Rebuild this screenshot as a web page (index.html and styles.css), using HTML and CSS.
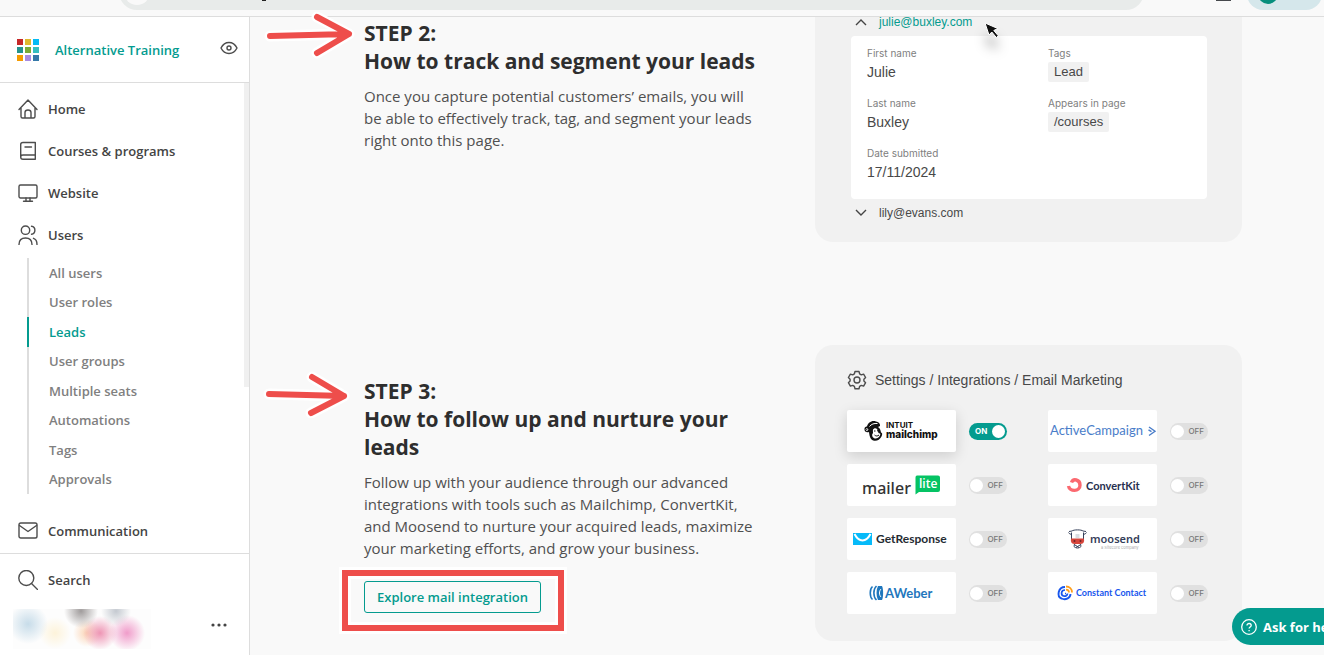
FILE: index.html
```
<!DOCTYPE html>
<html lang="en">
<head>
    <meta charset="UTF-8">
    <meta name="viewport" content="width=device-width, initial-scale=1.0">
    <title>Leads</title>
    <link rel="stylesheet" href="styles.css">
</head>
<body>
    <header class="browser-bar">
        <div class="address"><span class="site-info"></span><span class="caret"></span></div>
        <span class="download"></span>
        <div class="profile"><span class="profile-dot"></span></div>
    </header>

    <div class="app">
        <aside class="sidebar">
            <div class="brand">
                <svg class="brand-logo" width="22" height="22" viewBox="0 0 22 22" aria-hidden="true">
                    <rect x="0" y="0" width="6" height="6" fill="#c62828"/>
                    <rect x="8" y="0" width="6" height="6" fill="#e0b92e"/>
                    <rect x="16" y="0" width="6" height="6" fill="#03bbf5"/>
                    <rect x="0" y="8" width="6" height="6" fill="#26938d"/>
                    <rect x="8" y="8" width="6" height="6" fill="#7cab35"/>
                    <rect x="16" y="8" width="6" height="6" fill="#35bfc0"/>
                    <rect x="0" y="16" width="6" height="6" fill="#f59b00"/>
                    <rect x="8" y="16" width="6" height="6" fill="#a98be0"/>
                    <rect x="16" y="16" width="6" height="6" fill="#3579a8"/>
                </svg>
                <a href="#" class="brand-name">Alternative Training</a>
                <button type="button" class="icon-button" aria-label="Preview">
                    <svg class="icon" width="18" height="14" viewBox="0 0 18 14">
                        <path d="M1 7C3 3 5.800 1.500 9 1.500S15 3 17 7c-2 4-4.800 5.500-8 5.500S3 11 1 7z"/>
                        <circle cx="9" cy="7" r="2"/>
                    </svg>
                </button>
            </div>

            <nav class="menu">
                <a href="#" class="menu-item">
                    <svg class="icon" width="20" height="20" viewBox="0 0 20 20"><path d="M1 10.500L10 1l9 9.500M3 9v8.500c0 1 .6 1.500 1.500 1.500h11c.9 0 1.500-.5 1.500-1.500V9M7 19v-5.500c0-1.500 1-2.500 3-2.500s3 1 3 2.500V19"/></svg>
                    Home
                </a>
                <a href="#" class="menu-item">
                    <svg class="icon" width="20" height="20" viewBox="0 0 20 20"><path d="M17.300 14V1.500H5C3.500 1.500 2.700 2.300 2.700 3.500V16c0 1.300.8 2.200 2.300 2.200h12.300V14H5c-1.500 0-2.300.8-2.300 2M7 6h6.500"/></svg>
                    Courses &amp; programs
                </a>
                <a href="#" class="menu-item">
                    <svg class="icon" width="20" height="20" viewBox="0 0 20 20"><rect x="1" y="2" width="18" height="13" rx="1.500"/><path d="M8 15v3M12 15v3M5.500 18.300h9"/></svg>
                    Website
                </a>
                <a href="#" class="menu-item">
                    <svg class="icon" width="20" height="20" viewBox="0 0 20 20"><circle cx="7.500" cy="5.200" r="4.200"/><path d="M1 19.500c0-4.500 2.300-6.500 6.500-6.500s6.500 2 6.500 6.500M13.500 1.300c4.500.5 4.500 7.300 0 7.900M15.500 13.300c2.500.8 3.500 2.900 3.500 6.200"/></svg>
                    Users
                </a>
                <ul class="submenu">
                    <li><a href="#">All users</a></li>
                    <li><a href="#">User roles</a></li>
                    <li class="active"><a href="#">Leads</a></li>
                    <li><a href="#">User groups</a></li>
                    <li><a href="#">Multiple seats</a></li>
                    <li><a href="#">Automations</a></li>
                    <li><a href="#">Tags</a></li>
                    <li><a href="#">Approvals</a></li>
                </ul>
                <a href="#" class="menu-item">
                    <svg class="icon" width="20" height="20" viewBox="0 0 20 20"><rect x="1" y="2" width="18" height="15" rx="1.800"/><path d="M1.500 4.500L10 10.500l8.500-6"/></svg>
                    Communication
                </a>
            </nav>

            <div class="sidebar-footer">
                <a href="#" class="menu-item">
                    <svg class="icon" width="20" height="20" viewBox="0 0 20 20"><circle cx="8.300" cy="8" r="7.500"/><path d="M13.500 13.500l6 6"/></svg>
                    Search
                </a>
                <div class="user">
                    <div class="user-name"></div>
                    <button type="button" class="icon-button" aria-label="More">
                        <svg width="16" height="4" viewBox="0 0 16 4" fill="#444"><circle cx="2" cy="2" r="1.600"/><circle cx="8" cy="2" r="1.600"/><circle cx="14" cy="2" r="1.600"/></svg>
                    </button>
                </div>
            </div>
        </aside>

        <main class="content">
            <section class="step">
                <svg class="arrow arrow-two" width="92" height="48" viewBox="0 0 92 48" aria-hidden="true">
                    <path class="halo" d="M6 25L84 23M53 6l32 17-32 19"/>
                    <path d="M6 25L84 23M53 6l32 17-32 19"/>
                </svg>
                <div class="step-text">
                    <h2>STEP 2:<br>How to track and segment your leads</h2>
                    <p>Once you capture potential customers’ emails, you will be able to effectively track, tag, and segment your leads right onto this page.</p>
                </div>
                <div class="card leads-card">
                    <button type="button" class="lead open">
                        <svg class="chevron" width="12" height="8" viewBox="0 0 12 8"><path d="M1 7l5-5 5 5"/></svg>
                        julie@buxley.com
                    </button>
                    <div class="lead-panel">
                        <dl>
                            <dt>First name</dt>
                            <dd>Julie</dd>
                            <dt>Last name</dt>
                            <dd>Buxley</dd>
                            <dt>Date submitted</dt>
                            <dd>17/11/2024</dd>
                        </dl>
                        <dl>
                            <dt>Tags</dt>
                            <dd><span class="tag">Lead</span></dd>
                            <dt>Appears in page</dt>
                            <dd><span class="tag">/courses</span></dd>
                        </dl>
                    </div>
                    <button type="button" class="lead">
                        <svg class="chevron" width="12" height="8" viewBox="0 0 12 8"><path d="M1 1l5 5 5-5"/></svg>
                        lily@evans.com
                    </button>
                    <svg class="cursor" width="16" height="17" viewBox="0 0 16 17" aria-hidden="true"><path d="M1 1l4 12 2.800-3 4.500 5.500 2-1.700-4.500-5.300 4-2z" fill="#111" stroke="#fff"/></svg>
                </div>
            </section>

            <section class="step">
                <svg class="arrow arrow-three" width="92" height="48" viewBox="0 0 92 48" aria-hidden="true">
                    <path class="halo" d="M6 24l75 2M49 7l32 19-33 17"/>
                    <path d="M6 24l75 2M49 7l32 19-33 17"/>
                </svg>
                <div class="step-text">
                    <h2>STEP 3:<br>How to follow up and nurture your leads</h2>
                    <p>Follow up with your audience through our advanced integrations with tools such as Mailchimp, ConvertKit, and Moosend to nurture your acquired leads, maximize your marketing efforts, and grow your business.</p>
                    <div class="highlight">
                        <button type="button" class="outline-button">Explore mail integration</button>
                    </div>
                </div>
                <div class="card settings-card">
                    <h3>
                        <svg class="icon" width="20" height="20" viewBox="0 0 20 20"><path d="M8 1.500h4l.6 2.300 1.700 1 2.300-.7 2 3.400-1.700 1.700v1.800l1.700 1.700-2 3.400-2.300-.7-1.700 1-.6 2.300H8l-.6-2.300-1.700-1-2.300.7-2-3.400L3.100 11V9.200L1.400 7.500l2-3.400 2.300.7 1.700-1z"/><circle cx="10" cy="10" r="3"/></svg>
                        Settings / Integrations / Email Marketing
                    </h3>
                    <div class="integrations">
                        <div class="integration">
                            <div class="logo raised">
                                <svg width="109" height="42" viewBox="0 0 109 42">
                                    <path d="M22 22c-3 1-5-1-4.500-3.500.3-1.500 1.500-2 2.500-2C21 12.500 25 10 29 11.500c2.500.2 4.500 2.500 4 4.500l-2 1c2 1 2.500 3 3 5.500 1.500.2 1.500 2 .5 4-1.500 3-4 4.500-7 4.300-3.500-.2-5-3.800-5.500-8.800z" fill="#111"/>
                                    <path d="M22.500 16.500c2-2.500 4.500-3.300 8-3M18.800 19.500c.8-1.500 2-1 2 .2-.1 1-1 1-1.800.8" fill="none" stroke="#fff"/>
                                    <path d="M26 19.500c1.500-1.800 3-1.500 4-.5.8 1.500 1 2.500 1.500 4l1.800.8c0 2.500-2 4.700-4.500 4.700-3 0-4-2.500-3.500-4.500 1.500-1 .2-2.500.7-4.500z" fill="#fff"/>
                                    <path d="M27 21h1.500M30 20.800h1M27.500 25c1.500 1.300 3 1.300 4.500 0" fill="none" stroke="#111"/>
                                    <text class="intuit" x="39" y="18">INTUIT</text>
                                    <text class="mailchimp" x="39" y="28">mailchimp</text>
                                </svg>
                            </div>
                            <label class="switch on"><input type="checkbox" aria-label="Mailchimp" checked><span>ON</span></label>
                        </div>
                        <div class="integration">
                            <div class="logo">
                                <svg width="109" height="42" viewBox="0 0 109 42">
                                    <text class="activecampaign" x="2" y="25">ActiveCampaign</text>
                                    <path d="M101 17l6 4.300-6 4.200M100.500 19.800l3 1.800" fill="none" stroke="#4a7dc9" stroke-width="1.400"/>
                                </svg>
                            </div>
                            <label class="switch"><input type="checkbox" aria-label="ActiveCampaign"><span>OFF</span></label>
                        </div>
                        <div class="integration">
                            <div class="logo">
                                <svg width="109" height="42" viewBox="0 0 109 42">
                                    <text class="mailer" x="15" y="30">mailer</text>
                                    <path d="M70 11.500h21q2 0 2 2V26q0 2-2 2H72l-3.500 2.500v-17q0-2 1.500-2z" fill="#05c364"/>
                                    <text class="lite" x="72" y="24">lite</text>
                                </svg>
                            </div>
                            <label class="switch"><input type="checkbox" aria-label="MailerLite"><span>OFF</span></label>
                        </div>
                        <div class="integration">
                            <div class="logo">
                                <svg width="109" height="42" viewBox="0 0 109 42">
                                    <path d="M20.500 22c1 6 11.500 6 11.500-.800 0-6-7-7-8.500-2.700" fill="none" stroke="#fb6970" stroke-width="3.400"/>
                                    <text class="convertkit" x="38" y="26">ConvertKit</text>
                                </svg>
                            </div>
                            <label class="switch"><input type="checkbox" aria-label="ConvertKit"><span>OFF</span></label>
                        </div>
                        <div class="integration">
                            <div class="logo">
                                <svg width="109" height="42" viewBox="0 0 109 42">
                                    <rect x="6" y="15" width="19" height="12" fill="#06baf9"/>
                                    <path d="M7.500 16c4.500 8.500 11.500 8.500 16 0" fill="none" stroke="#fff" stroke-width="2"/>
                                    <text class="getresponse" x="29" y="25">GetResponse</text>
                                </svg>
                            </div>
                            <label class="switch"><input type="checkbox" aria-label="GetResponse"><span>OFF</span></label>
                        </div>
                        <div class="integration">
                            <div class="logo">
                                <svg width="109" height="42" viewBox="0 0 109 42">
                                    <path d="M23.500 14.500V21M35.500 14.500V21M24 13c1.500-1.500 9.500-1.500 11 0M20.500 14.500c1 1.500 2 2 3.500 1.500M38.500 14.500c-1 1.500-2 2-3.500 1.500M21 13.500l3-.5M38 13.500l-3-.5M26.500 26l-.5 2.500c2 2 5 2 7 0L32.500 26M27 27l4 2.500M32 27l-4 2.500" fill="none" stroke="#35405a" stroke-width="1"/>
                                    <path d="M27.500 17h4M27.500 19h4" fill="none" stroke="#b4bac4" stroke-width="1"/>
                                    <path d="M23 20.500h13q1 5.500-4 5.500h-5q-5 0-4-5.500z" fill="#d5453b"/>
                                    <circle cx="26.500" cy="23" r="1" fill="#71242a"/><circle cx="32.500" cy="23" r="1" fill="#71242a"/>
                                    <text class="moosend" x="42" y="25">moosend</text>
                                    <text class="sitecore" x="53" y="31">a Sitecore company</text>
                                </svg>
                            </div>
                            <label class="switch"><input type="checkbox" aria-label="Moosend"><span>OFF</span></label>
                        </div>
                        <div class="integration">
                            <div class="logo">
                                <svg width="109" height="42" viewBox="0 0 109 42">
                                    <path d="M25.500 14.500c-3 2.500-3 10.500 0 13" fill="none" stroke="#1f77bd" stroke-width="1.600"/>
                                    <path d="M29.500 14c-3.500 3-3.500 11 0 14" fill="none" stroke="#1f77bd" stroke-width="1.600"/>
                                    <path d="M31 14h4c1.500 3 1.500 11 0 14h-4c-2-4-2-10 0-14z" fill="#1f77bd"/>
                                    <path d="M34 17c-2 2-2 6 0 8" fill="none" stroke="#fff"/>
                                    <text class="aweber" x="38" y="26">AWeber</text>
                                </svg>
                            </div>
                            <label class="switch"><input type="checkbox" aria-label="AWeber"><span>OFF</span></label>
                        </div>
                        <div class="integration">
                            <div class="logo">
                                <svg width="109" height="42" viewBox="0 0 109 42">
                                    <path d="M17 15c-7 0-8.500 9.500-3.500 11.500 4.500 2 9-1 9-4.500" fill="none" stroke="#1856ed" stroke-width="1.900"/>
                                    <path d="M17 18c-4 0-4.500 5-1.500 6 2 .5 4-.5 4-2.500M17 21.500h1" fill="none" stroke="#1856ed" stroke-width="1.700"/>
                                    <path d="M18 14.500c3.500 0 6 2.500 6 6M18 17.600c2 0 3 1 3 3" fill="none" stroke="#ff9e1a" stroke-width="1.800"/>
                                    <text class="constant" x="28" y="24">Constant Contact</text>
                                </svg>
                            </div>
                            <label class="switch"><input type="checkbox" aria-label="Constant Contact"><span>OFF</span></label>
                        </div>
                    </div>
                </div>
            </section>
        </main>
    </div>

    <button type="button" class="help">
        <svg width="16" height="16" viewBox="0 0 16 16" fill="none" stroke="#fff"><circle cx="8" cy="8" r="7.300" stroke-width="1.300"/><path d="M6 6.500c0-2.700 4.200-2.600 4.200 0 0 1.500-2.100 1.500-2.100 3.100M8.100 11v1.300" stroke-width="1.300"/></svg>
        Ask for help
    </button>
</body>
</html>
```
FILE: styles.css
```
* {
    box-sizing: border-box;
}
body {
    margin: 0;
    min-height: 100vh;
    overflow: hidden;
    display: flex;
    flex-direction: column;
    font-family: "Open Sans", "Noto Sans", sans-serif;
    font-size: 13px;
    color: #444;
    background: #f9f9f9;
}
a {
    color: inherit;
    text-decoration: none;
}
button {
    font-family: inherit;
    cursor: pointer;
}
h2, h3, p, dl, dd, ul {
    margin: 0;
    padding: 0;
}
svg {
    flex: none;
    display: block;
}
.icon {
    fill: none;
    stroke: #4d4d4d;
    stroke-width: 1.4;
    stroke-linecap: round;
    stroke-linejoin: round;
}
.icon-button {
    padding: 0;
    border: none;
    background: none;
}

/* browser toolbar */
.browser-bar {
    display: flex;
    align-items: flex-end;
    height: 17px;
    padding: 0 2px 6px 119px;
    border-bottom: 1px solid #ddd;
    background: #f9f9f9;
    overflow: hidden;
}
.address {
    flex: 1;
    display: flex;
    align-items: center;
    gap: 112px;
    height: 36px;
    padding-left: 5px;
    border-radius: 18px;
    background: #e8ebea;
}
.site-info {
    width: 26px;
    height: 26px;
    border-radius: 50%;
    background: #f9f9f9;
}
.caret {
    align-self: flex-end;
    width: 4px;
    height: 10px;
    margin-bottom: 9px;
    border-bottom: 1px solid #222;
}
.download {
    width: 15px;
    height: 10px;
    margin: 0 16px 9px 72px;
    border-bottom: 1px solid #46494d;
}
.profile {
    width: 75px;
    height: 32px;
    padding: 6px 11px;
    border-radius: 16px;
    background: #d5e7eb;
}
.profile-dot {
    display: block;
    width: 20px;
    height: 20px;
    border-radius: 50%;
    background: #068f7d;
}

.app {
    flex: 1;
    display: flex;
}

/* sidebar */
.sidebar {
    flex: none;
    width: 250px;
    background: #fff;
    border-right: 1px solid #ddd;
}
.brand {
    display: flex;
    align-items: center;
    height: 66px;
    padding: 0 11px 0 17px;
    border-bottom: 1px solid #ddd;
}
.brand-name {
    flex: 1;
    margin-left: 16px;
    font-weight: 600;
    color: #049b8f;
}
.brand .icon-button {
    margin-bottom: 4px;
}
.menu {
    position: relative;
    padding: 5px 0 1px;
}
/* scrollbar thumb */
.menu::after {
    content: "";
    position: absolute;
    top: 0;
    right: 0;
    width: 5px;
    height: 304px;
    background: #f0f0f0;
}
.menu-item {
    display: flex;
    align-items: center;
    gap: 10px;
    height: 42px;
    padding-left: 18px;
    font-weight: 600;
}
.submenu {
    display: flex;
    flex-direction: column;
    height: 236px;
    margin: 2px 0 16px 27px;
    list-style: none;
}
.submenu li {
    flex: 1;
    display: flex;
    align-items: center;
    padding-left: 20px;
    border-left: 2px solid #ddd;
    font-weight: 600;
    color: #808080;
}
.submenu .active {
    color: #049b8f;
    border-color: #049b8f;
}
.sidebar-footer {
    padding-top: 5px;
    border-top: 1px solid #ddd;
}
.user {
    display: flex;
    align-items: center;
    justify-content: space-between;
    height: 40px;
    margin-top: 8px;
    padding: 0 22px 8px 13px;
}
/* account name, blurred for privacy */
.user-name {
    align-self: flex-start;
    flex: none;
    width: 138px;
    height: 40px;
    background:
        radial-gradient(circle at 15px 15px, #c7dce9, transparent 20px),
        radial-gradient(circle at 68px 2px, #a09c9c, transparent 17px),
        radial-gradient(circle at 103px 2px, #c4c9d0, transparent 15px),
        radial-gradient(circle at 87px 24px, #ee95b4, transparent 17px),
        radial-gradient(circle at 114px 24px, #f09cca, transparent 18px),
        radial-gradient(circle at 74px 24px, #fbd5b5, transparent 14px),
        radial-gradient(circle at 42px 24px, #fdf3da, transparent 16px),
        #fdfdfd;
}

/* steps */
.content {
    flex: 1;
    display: flex;
    flex-direction: column;
    gap: 103px;
    padding: 0 82px 14px 114px;
}
.step {
    position: relative;
    display: flex;
    justify-content: space-between;
}
.step:last-child {
    align-items: center;
}
.step-text {
    width: 400px;
    padding-top: 2px;
}
.step-text h2 {
    margin-bottom: 10px;
    font-size: 21px;
    line-height: 28px;
    font-weight: 700;
    color: #2e2e2e;
}
.step-text p {
    font-size: 15px;
    line-height: 22px;
    color: #505050;
}
.arrow {
    position: absolute;
    fill: none;
    stroke: #ee4e4b;
    stroke-width: 6;
    stroke-linecap: round;
    stroke-linejoin: round;
}
.arrow .halo {
    stroke: #fff;
    stroke-width: 11;
}
.arrow-two {
    left: -100px;
    top: -6px;
}
.arrow-three {
    left: -101px;
    top: 25px;
}
.highlight {
    position: relative;
    width: fit-content;
    margin: 22px 0 -2px;
}
/* red frame drawn round the button */
.highlight::after {
    content: "";
    position: absolute;
    inset: -11px -23px -18px -22px;
    border: 6px solid #ee4e4b;
    box-shadow: 0 0 0 3px #fff, inset 0 0 0 3px #fff;
    pointer-events: none;
}
.outline-button {
    display: block;
    height: 32px;
    padding: 0 12px;
    border: 1px solid #049b8f;
    border-radius: 3px;
    background: none;
    font-size: 13px;
    font-weight: 600;
    color: #049b8f;
}

/* cards */
.card {
    position: relative;
    flex: none;
    width: 427px;
    border-radius: 18px;
    background: #f1f1f1;
    font-family: "Liberation Sans", Arial, sans-serif;
    color: #484848;
}
.leads-card {
    padding: 0 35px 24px 36px;
    border-radius: 0 0 18px 18px;
}
.lead {
    display: flex;
    align-items: center;
    gap: 12px;
    height: 10px;
    padding: 0 4px;
    border: none;
    background: none;
    font-size: 12px;
    line-height: 10px;
    color: #484848;
}
.lead.open {
    color: #049b8f;
}
.chevron {
    fill: none;
    stroke: #444;
    stroke-width: 1.4;
}
.lead-panel {
    display: grid;
    grid-template-columns: 181px 1fr;
    margin: 9px 0;
    padding: 11px 16px 2px;
    border-radius: 4px;
    background: #fff;
}
.lead-panel dt {
    margin-bottom: 3px;
    font-family: Inter, sans-serif;
    font-size: 10px;
    line-height: 12px;
    color: #808080;
}
.lead-panel dd {
    display: flex;
    margin-bottom: 15px;
    font-size: 14px;
    line-height: 20px;
}
.tag {
    padding: 0 6px;
    border-radius: 2px;
    background: #f1f1f1;
    font-size: 13px;
}
.cursor {
    position: absolute;
    left: 169px;
    top: 5px;
    filter: drop-shadow(0 12px 6px rgba(0, 0, 0, 0.3));
}
.settings-card {
    padding: 25px 32px 27px;
}
.settings-card h3 {
    display: flex;
    align-items: center;
    gap: 8px;
    margin-bottom: 20px;
    font-size: 14px;
    line-height: 20px;
    font-weight: 400;
}
.integrations {
    display: grid;
    grid-template-columns: 189px 1fr;
    gap: 12px;
}
.integration {
    display: flex;
    align-items: center;
    gap: 13px;
}
.logo {
    border-radius: 2px;
    background: #fff;
}
.logo.raised {
    box-shadow: 0 4px 14px rgba(0, 0, 0, 0.15);
}
.switch {
    display: flex;
    align-items: center;
    justify-content: space-between;
    width: 38px;
    height: 17px;
    padding: 0 4px 0 1px;
    border-radius: 9px;
    background: #e0e0e0;
    font-family: Inter, sans-serif;
    font-size: 8px;
    font-weight: 500;
    color: #777;
}
.switch input {
    appearance: none;
    width: 13px;
    height: 13px;
    margin: 0;
    border-radius: 50%;
    background: #fff;
}
.switch.on {
    flex-direction: row-reverse;
    padding: 0 2px 0 6px;
    background: #049b8f;
    font-weight: 700;
    color: #fff;
}

/* logo lettering */
.intuit {
    font: 700 8px Inter, sans-serif;
    fill: #111;
}
.mailchimp {
    font: 800 10px Inter, sans-serif;
    fill: #111;
}
.activecampaign {
    font: 400 13px Lato, sans-serif;
    fill: #4a7dc9;
}
.mailer {
    font: 500 16px "Noto Sans", sans-serif;
    fill: #333;
}
.lite {
    font: 600 12px "Open Sans", sans-serif;
    fill: #fff;
}
.convertkit {
    font: 700 11px Lato, sans-serif;
    fill: #28304f;
}
.getresponse {
    font: 700 12px Lato, sans-serif;
    fill: #252c33;
}
.moosend {
    font: 600 11px "Noto Sans", sans-serif;
    fill: #35405a;
}
.sitecore {
    font: 400 4px Inter, sans-serif;
    fill: #aaa;
}
.aweber {
    font: 700 13px Lato, sans-serif;
    fill: #1f77bd;
}
.constant {
    font: 700 9px Lato, sans-serif;
    fill: #1856ed;
}

.help {
    position: fixed;
    right: -35px;
    bottom: 10px;
    display: flex;
    align-items: center;
    gap: 6px;
    width: 127px;
    height: 37px;
    padding: 0 9px;
    border: none;
    border-radius: 19px;
    background: #049b8f;
    font-size: 13px;
    font-weight: 700;
    white-space: nowrap;
    color: #fff;
}
```
